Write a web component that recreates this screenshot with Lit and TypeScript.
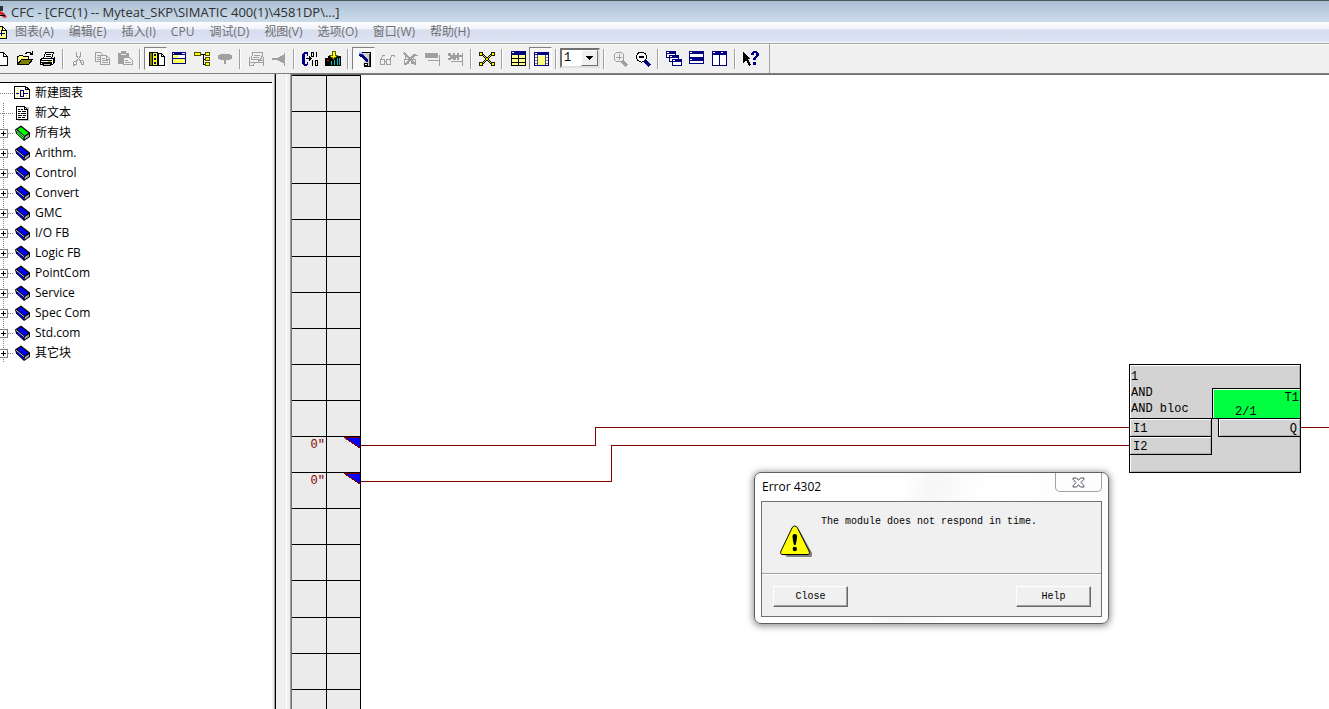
import { LitElement, html, svg, css, nothing } from "lit";
import { customElement, property, state } from "lit/decorators.js";
import { classMap } from "lit/directives/class-map.js";

const GRAY = "#a0a0a0";
const NAVY = "#000080";

/* Toolbar glyphs, drawn on an 18 x 16 pixel grid. */
const glyphs: Record<string, unknown> = {
  fresh: svg`<path d="M2.5 1.5h8l4 4v9h-12z" fill="#fff" stroke="#000"/><path d="M10.5 1.5v4h4" fill="none" stroke="#000"/>`,
  open: svg`<path d="M1.5 13.5v-8h1l1-1h3l1 1h5v3" fill="#ffff80" stroke="#000"/><path d="M1.5 13.5l4-5h11l-4 5z" fill="#808000" stroke="#000"/><path d="M9 2.5h1v-1h4v1h1v1h1M16.5 0v4M14 3.5h3" fill="none" stroke="#000"/>`,
  print: svg`<path d="M4.5 7.5l2-6h8l-2 6" fill="#fff" stroke="#000"/><path d="M7 3.500h5M6.500 5.500h5" stroke="#000"/><path d="M1.500 8.500l2-1h11l1-1v5l-2 2h-12z" fill="#fff" stroke="#000"/><path d="M1 9.500h12M14.500 7v5M2 11.500h11" stroke="#000"/><path d="M3.500 12.500h9l-1 2h-7z" fill="#c0c0c0" stroke="#000"/><path d="M9 10h3v1H9z" fill="#c0c000"/>`,
  cut: svg`<path d="M6.500 1v4l4 5M10.500 1v4l-4 5" fill="none" stroke="${GRAY}"/><path d="M4.500 10.500h2v3h-2v1h-1v-3zM10.500 9.500h2l1 1v3h-2z" fill="none" stroke="${GRAY}"/>`,
  copy: svg`<path d="M2.500 1.500h5l2 2v7h-7z" fill="#f0f0f0" stroke="${GRAY}"/><path d="M4 4.500h4M4 6.500h4M4 8.500h3" stroke="${GRAY}"/><path d="M7.500 4.500h6l3 3v6h-9z" fill="#f0f0f0" stroke="${GRAY}"/><path d="M9 7.500h3M9 9.500h6M9 11.500h6M13.500 5v3h3" fill="none" stroke="${GRAY}"/>`,
  paste: svg`<path d="M2 2h3V0h5v2h3v4h-5v7H2z" fill="${GRAY}"/><path d="M5 3.500h5" stroke="#f0f0f0"/><path d="M7.500 6.500h6l3 3v4h-9z" fill="#f0f0f0" stroke="${GRAY}"/><path d="M9 9.500h3M9 11.500h6" stroke="${GRAY}"/>`,
  catalog: svg`<path d="M2.500 1.500h4v13h-4z" fill="#808000" stroke="#000"/><path d="M5.500 1.500h5v13h-5z" fill="#ffff00" stroke="#000"/><path d="M7 3h2v2H7zM7 7h2v2H7zM7 11h2v2H7z" fill="${NAVY}"/><path d="M11.500 2.500h3l3 3v9h-6z" fill="#fff" stroke="#000"/><path d="M14.500 2.500v3h3" fill="none" stroke="#000"/>`,
  windowPane: svg`<path d="M2.500 1.500h13v11h-13z" fill="#fff" stroke="${NAVY}"/><path d="M2 1h14v3H2z" fill="${NAVY}"/><path d="M3 2h1v1H3zM12 2h3v1h-3z" fill="#fff"/><path d="M3 4h5v3H3zM3 8h12v4H3z" fill="#ffff60"/><path d="M3 7.500h12" stroke="${NAVY}"/>`,
  tree: svg`<path d="M5 3.500h5v10h2M10 8.500h2M9 3.500h3" fill="none" stroke="#000"/><path d="M1.500 1.500h6v3h-6zM12.500 1.500h4v3h-4zM12.500 6.500h4v3h-4zM12.500 11.500h4v3h-4z" fill="#ffff00" stroke="#505000"/>`,
  balloon: svg`<path d="M4 3h10v1h2v4h-2v1h-4v4H8V9H4V8H2V4h2z" fill="${GRAY}"/>`,
  sheet: svg`<path d="M5.500 1.500h10v3l-2 4h-9z" fill="none" stroke="${GRAY}"/><path d="M7 4.500h6M6 6.500h6M2.500 6v5h10M2.500 11v3h4l2-3M16.500 6v9M11 9h5v2h-5z" fill="none" stroke="${GRAY}"/>`,
  pinLeft: svg`<path d="M2 7h6v2H2zM8 6h2V5h2V4h2v8h-2v-1h-2v-1H8z" fill="${GRAY}"/><path d="M14 2h1v13h-1z" fill="${GRAY}"/>`,
  compile: svg`<path d="M7 1v4H6V3H4v10h2v-2h1v3h-1v1H3v-1H2v-1H1V3h1V2h1V1z" fill="${NAVY}"/><path d="M5 7h3V5h1v1h1v1h1v1h-1v1H9v1H8V8H5z" fill="#000"/><path d="M10.500 1.500h2v4h-2zM15.500 1v5M11.500 9v6M14.500 9.500h2v5h-2z" fill="none" stroke="#000"/>`,
  download: svg`<path d="M1 7h3V5h13v10H1z" fill="#000"/><path d="M8 0h3v4h3L9.500 8 5 4h3z" fill="#ffff00" stroke="#606000"/><path d="M3 9h2v1H3z" fill="#f00"/><path d="M7.500 10v4M10.500 9v5M13.500 7v7M15.500 7v7" stroke="#00c0c0"/>`,
  testMode: svg`<path d="M7 1h8v14H8v-3h1V8z" fill="#d0d0d0"/><path d="M6 1.500h9.500v14H9v-3" fill="none" stroke="#000"/><path d="M14 3v12" stroke="#404040"/><path d="M9.500 12.500h3v2h-3z" fill="#fff" stroke="#000"/><path d="M4 3h4v1h1v1h1v1h1v1h1v1h1v3h-2v-1h-1V9H9V8H8V7H7V6H5V5H4z" fill="${NAVY}"/><path d="M4 1h3v2H4z" fill="#b0b8ff"/>`,
  glasses: svg`<path d="M2.500 8.500h4v5h-4zM8.500 8.500h4v5h-4zM3 8l2-4h2M12 8l2-4h2v2M6 10.500h3" fill="none" stroke="${GRAY}"/>`,
  glassesOff: svg`<path d="M3.500 8.500h4v4h-4zM10.500 8.500h4v4h-4zM4 8l2-5M12 8l2-4h3" fill="none" stroke="${GRAY}"/><path d="M3 2l12 12M14 3L4 14" stroke="${GRAY}" stroke-width="2"/>`,
  rowOut: svg`<path d="M1 2h13v5H1zM4 9h12v1H4zM15 4h1v11h-1z" fill="${GRAY}"/>`,
  rowOff: svg`<path d="M1 2h3v2h2V2h2v2h2V2h2v7h-2V7H9v2H6V8H4v1H1V7h2V5H1zM4 10h12v1H4zM15 2h1v13h-1zM12 4h3v2h-3z" fill="${GRAY}"/>`,
  expand: svg`<path d="M3 2l12 12M15 2L3 14" stroke="#000" stroke-width="2.500"/><path d="M3 2l12 12M15 2L3 14" stroke="#e0e000"/><path d="M1.500 1.500h3v3h-3zM13.500 1.500h3v3h-3zM1.500 11.500h3v3h-3zM13.500 11.500h3v3h-3z" fill="#ffff00" stroke="#202000"/>`,
  table: svg`<path d="M2.500 1.500h14v13h-14z" fill="#ffff90" stroke="#000"/><path d="M2 0h15v4H2z" fill="${NAVY}"/><path d="M3 1h2v1H3z" fill="#fff"/><path d="M3 7.500h13M3 11.500h13M9.500 4v10" stroke="#000"/>`,
  columns: svg`<path d="M2.500 1.500h14v13h-14z" fill="#fff" stroke="${NAVY}"/><path d="M2 1h15v3H2z" fill="${NAVY}"/><path d="M3 2h2v1H3z" fill="#fff"/><path d="M6 5h7v9H6z" fill="#ffff80"/><path d="M5.500 4v10M13.500 4v10" stroke="#404080"/><path d="M3 6.500h2M3 9.500h2M3 12.500h2M14 6.500h2M14 9.500h2M14 12.500h2" stroke="#808080"/>`,
  zoomIn: svg`<circle cx="8" cy="6" r="5" fill="none" stroke="${GRAY}"/><path d="M5 6.500h6M8.500 3v6" stroke="${GRAY}"/><path d="M11 10l5 5" stroke="${GRAY}" stroke-width="3"/>`,
  zoomOut: svg`<circle cx="7.500" cy="6" r="5" fill="#f8f8f8" stroke="#000"/><path d="M5 6h5" stroke="#000" stroke-width="2"/><path d="M11 10l5 5" stroke="${NAVY}" stroke-width="3"/>`,
  cascade: svg`<path d="M1.500 .500h9v6h-9z" fill="#fff" stroke="${NAVY}"/><path d="M1 0h10v3H1z" fill="${NAVY}"/><path d="M4.500 4.500h9v6h-9z" fill="#fff" stroke="${NAVY}"/><path d="M4 4h10v3H4z" fill="${NAVY}"/><path d="M7.500 8.500h9v6h-9z" fill="#fff" stroke="${NAVY}"/><path d="M7 8h10v3H7z" fill="${NAVY}"/><path d="M2 1h2v1H2zM5 5h2v1H5zM8 9h2v1H8z" fill="#fff"/>`,
  tileRows: svg`<path d="M1.500 .500h14v12h-14z" fill="#fff" stroke="${NAVY}"/><path d="M1 0h15v3H1zM1 6h15v4H1z" fill="${NAVY}"/><path d="M2 1h2v1H2zM2 8h2v1H2z" fill="#fff"/>`,
  tileCols: svg`<path d="M1.500 .500h14v14h-14z" fill="#fff" stroke="${NAVY}"/><path d="M1 0h15v4H1zM8 0h1v15H8z" fill="${NAVY}"/><path d="M2 1h2v1H2zM10 1h2v1h-2z" fill="#fff"/>`,
  help: svg`<path d="M1 1l8 7H6l3 6-2 1-3-6-3 3z" fill="#000"/><path d="M9 4V2h1V1h1V0h4v1h1v1h1v3h-1v1h-1v1h-1v2h-3V7h1V6h1V5h1V2h-2v2zM11 11h3v3h-3z" fill="${NAVY}"/>`,
};

type Tool = { icon: string; label: string; pressed?: boolean; disabled?: boolean };

const toolGroups: Tool[][] = [
  [
    { icon: "fresh", label: "新建" },
    { icon: "open", label: "打开" },
    { icon: "print", label: "打印" },
  ],
  [
    { icon: "cut", label: "剪切", disabled: true },
    { icon: "copy", label: "复制", disabled: true },
    { icon: "paste", label: "粘贴", disabled: true },
  ],
  [
    { icon: "catalog", label: "目录", pressed: true },
    { icon: "windowPane", label: "图表" },
    { icon: "tree", label: "运行顺序" },
    { icon: "balloon", label: "注释", disabled: true },
  ],
  [
    { icon: "sheet", label: "跳转", disabled: true },
    { icon: "pinLeft", label: "连接", disabled: true },
  ],
  [
    { icon: "compile", label: "编译" },
    { icon: "download", label: "下载" },
  ],
  [
    { icon: "testMode", label: "测试模式", pressed: true },
    { icon: "glasses", label: "监视", disabled: true },
    { icon: "glassesOff", label: "停止监视", disabled: true },
    { icon: "rowOut", label: "插入行", disabled: true },
    { icon: "rowOff", label: "删除行", disabled: true },
  ],
  [{ icon: "expand", label: "全部显示" }],
  [
    { icon: "table", label: "总览" },
    { icon: "columns", label: "页视图", pressed: true },
  ],
];

const zoomTools: Tool[] = [
  { icon: "zoomIn", label: "放大", disabled: true },
  { icon: "zoomOut", label: "缩小" },
];

const windowTools: Tool[] = [
  { icon: "cascade", label: "层叠" },
  { icon: "tileRows", label: "水平平铺" },
  { icon: "tileCols", label: "垂直平铺" },
];

const menus = ["图表(A)", "编辑(E)", "插入(I)", "CPU", "调试(D)", "视图(V)", "选项(O)", "窗口(W)", "帮助(H)"];

const uiFont = css`"Open Sans", "Noto Sans CJK SC", sans-serif`;
const fixedFont = css`"Liberation Mono", "Noto Sans CJK SC", monospace`;

@customElement("cfc-toolbar")
export class CfcToolbar extends LitElement {
  static styles = css`
    :host {
      display: flex;
      align-items: center;
      height: 29px;
      overflow: hidden;
      background: #f0f0f0;
      border-top: 1px solid #a0a0a0;
      border-bottom: 1px solid #808080;
      box-shadow: inset 0 1px #fff;
    }
    .strip {
      display: flex;
      align-items: center;
      align-self: stretch;
      margin-left: -10px;
      padding-right: 7px;
      border-right: 1px solid #a0a0a0;
    }
    .tool {
      box-sizing: border-box;
      width: 23px;
      height: 23px;
      margin: 0;
      padding: 0;
      border: 1px solid transparent;
      background: none;
      display: flex;
      align-items: center;
      justify-content: center;
    }
    .tool.pressed {
      padding-left: 1px;
      border-color: #808080 #fff #fff #808080;
      background: #f8f8f8;
    }
    .glyph {
      display: block;
      flex: none;
      width: 18px;
      height: 16px;
      shape-rendering: crispEdges;
    }
    .sep {
      width: 8px;
      height: 20px;
      background: linear-gradient(#a0a0a0, #a0a0a0) 3px 0 / 1px 100% no-repeat,
        linear-gradient(#fff, #fff) 4px 0 / 1px 100% no-repeat;
    }
    .picker {
      box-sizing: border-box;
      display: flex;
      width: 40px;
      height: 20px;
      margin-bottom: 2px;
      position: relative;
      border: 2px solid;
      border-color: #707070 #e0e0e0 #e0e0e0 #707070;
      background: #fff;
    }
    .picker select {
      appearance: none;
      width: 100%;
      border: 0;
      margin: 0;
      padding: 0 0 0 2px;
      background: none;
      border-radius: 0;
      color: #000;
      font: 12px/16px ${fixedFont};
    }
    .drop {
      box-sizing: border-box;
      position: absolute;
      top: 0;
      right: 0;
      width: 17px;
      height: 16px;
      pointer-events: none;
      background: #f0f0f0;
      border: 1px solid;
      border-color: #fff #707070 #707070 #fff;
      shape-rendering: crispEdges;
    }
  `;

  @state() private page = "1";

  private tool(t: Tool) {
    return html`<button
      class=${classMap({ tool: true, pressed: !!t.pressed })}
      type="button"
      aria-label=${t.label}
      ?disabled=${t.disabled}
    >
      <svg class="glyph" viewBox="0 0 18 16" aria-hidden="true">${glyphs[t.icon]}</svg>
    </button>`;
  }

  render() {
    return html`<div class="strip" role="toolbar">
      ${toolGroups.map((g) => html`${g.map((t) => this.tool(t))}<span class="sep"></span>`)}
      <label class="picker">
        <select aria-label="页" .value=${this.page} @change=${(e: Event) => (this.page = (e.target as HTMLSelectElement).value)}>
          <option>1</option>
        </select>
        <svg class="drop" viewBox="0 0 15 14" aria-hidden="true"><path d="M4 5h7v1h-1v1H9v1H8v1H7V8H6V7H5V6H4z" /></svg>
      </label>
      <span class="sep"></span>
      ${zoomTools.map((t) => this.tool(t))}<span class="sep"></span>
      ${windowTools.map((t) => this.tool(t))}<span class="sep"></span>
      ${this.tool({ icon: "help", label: "帮助" })}
    </div>`;
  }
}

type Node = { name: string; kind: "chart" | "text" | "green" | "blue" };

const nodes: Node[] = [
  { name: "新建图表", kind: "chart" },
  { name: "新文本", kind: "text" },
  { name: "所有块", kind: "green" },
  ...["Arithm.", "Control", "Convert", "GMC", "I/O FB", "Logic FB", "PointCom", "Service", "Spec Com", "Std.com", "其它块"].map(
    (name): Node => ({ name, kind: "blue" })
  ),
];

function nodeIcon(kind: Node["kind"]) {
  if (kind === "chart")
    return svg`<path d="M.500 1.500h11l4 3v9h-15z" fill="#fff" stroke="#000"/><path d="M11.500 1.500v3h4" fill="none" stroke="#000"/><path d="M3.500 3v10M12.500 6v7" stroke="#e0e000" stroke-dasharray="1 1"/><path d="M2 8.500h3M10 8.500h4" stroke="#000080"/><path d="M6.500 5.500h3v6h-3z" fill="#ffff90" stroke="#000080"/>`;
  if (kind === "text")
    return svg`<path d="M4 2h11v14H4z" fill="#c0c0c0"/><path d="M2.500 1.500h8l3 3v10h-11z" fill="#fff" stroke="#000"/><path d="M10.500 1.500v3h3" fill="none" stroke="#000"/><path d="M4 4.500h2M7 4.500h2M4 6.500h3M8 6.500h4M4 8.500h2M7 8.500h5M4 10.500h4M9 10.500h3M4 12.500h3M8 12.500h3" stroke="#000"/>`;
  const fill = kind === "green" ? "#00ff00" : "#0000ff";
  return svg`<path d="M1 4.500L7 .500l9 7v4.500l-6 4L2 8.500z" fill="#000"/><path d="M3.500 4.500L7 2l7.500 6-4 2.700z" fill="${fill}"/><path d="M2.500 6.500l7 6v2l-6.500-6z" fill="${fill}"/><path d="M2 5.200l8 6.500" stroke="#e0e0e0" stroke-width=".9"/><path d="M10.700 12L15 9.200v2.300l-4.300 3z" fill="#a8a8a8"/>`;
}

@customElement("block-catalog")
export class BlockCatalog extends LitElement {
  static styles = css`
    :host {
      display: block;
      background: #fff;
      border-top: 1px solid #000;
      box-sizing: border-box;
      overflow: hidden;
      font: 12px/20px ${uiFont};
      color: #000;
    }
    .nodes {
      list-style: none;
      margin: 0;
      padding: 0;
    }
    .node {
      display: flex;
      align-items: center;
      height: 20px;
      background: linear-gradient(90deg, #808080 50%, transparent 50%) 4px 10px / 2px 1px repeat-x,
        linear-gradient(#808080 50%, transparent 50%) 3px 0 / 1px 2px repeat-y;
    }
    .node:first-child {
      background-image: linear-gradient(90deg, #808080 50%, transparent 50%);
      background-size: 2px 1px;
    }
    .knob {
      box-sizing: border-box;
      flex: none;
      width: 9px;
      height: 9px;
      margin: 0 6px 0 -1px;
      padding: 0;
      border: 1px solid #808080;
      background: linear-gradient(#000, #000) center / 5px 1px no-repeat, linear-gradient(#000, #000) center / 1px 5px no-repeat,
        #fff;
    }
    .gap {
      flex: none;
      width: 14px;
    }
    .body {
      flex: 1;
      display: flex;
      align-items: center;
      gap: 5px;
      background: #fff;
      white-space: nowrap;
    }
    .pic {
      flex: none;
      width: 16px;
      height: 16px;
    }
    .pic.crisp {
      shape-rendering: crispEdges;
    }
  `;

  render() {
    return html`<ul class="nodes">
      ${nodes.map((n) => {
        const book = n.kind === "green" || n.kind === "blue";
        return html`<li class="node">
          ${book ? html`<button class="knob" type="button" aria-label="展开 ${n.name}"></button>` : html`<span class="gap"></span>`}
          <span class="body">
            <svg class=${classMap({ pic: true, crisp: !book })} viewBox="0 0 16 16" aria-hidden="true">${nodeIcon(n.kind)}</svg>
            <span>${n.name}</span>
          </span>
        </li>`;
      })}
    </ul>`;
  }
}

@customElement("function-block")
export class FunctionBlock extends LitElement {
  static styles = css`
    :host {
      display: block;
      box-sizing: border-box;
      width: 172px;
      padding-bottom: 17px;
      border: 1px solid #000;
      background: #d3d3d3;
      box-shadow: inset 1px 1px #fff, inset -1px -1px #b0b0b0;
      font: 12px/16px ${fixedFont};
      color: #000;
    }
    .head {
      display: flex;
      align-items: flex-end;
      justify-content: space-between;
      border-bottom: 1px solid #000;
    }
    .names {
      padding: 4px 0 1px 1px;
      white-space: nowrap;
    }
    .task {
      box-sizing: border-box;
      width: 88px;
      height: 30px;
      padding: 2px 1px 0 22px;
      border: 1px solid #000;
      border-right: 0;
      border-bottom: 0;
      background: #00ff40;
      box-shadow: inset 1px 1px #e8ffe8;
      line-height: 14px;
    }
    .order {
      text-align: right;
    }
    .pins {
      display: flex;
      justify-content: space-between;
      align-items: flex-start;
    }
    .pin {
      box-sizing: border-box;
      width: 82px;
      height: 18px;
      padding: 1px 3px 0;
      line-height: 18px;
      border: solid #000;
      border-width: 0 1px 1px 0;
      box-shadow: inset 1px 1px #fff, inset -1px -1px #b0b0b0;
    }
    .pin.out {
      border-width: 0 0 1px 1px;
      text-align: right;
    }
  `;

  render() {
    return html`
      <div class="head">
        <div class="names">
          <div>1</div>
          <div>AND</div>
          <div>AND bloc</div>
        </div>
        <div class="task">
          <div class="order">T1</div>
          <div>2/1</div>
        </div>
      </div>
      <div class="pins">
        <div>
          <div class="pin">I1</div>
          <div class="pin">I2</div>
        </div>
        <div class="pin out">Q</div>
      </div>
    `;
  }
}

@customElement("error-dialog")
export class ErrorDialog extends LitElement {
  static styles = css`
    :host {
      display: block;
      box-sizing: border-box;
      width: 355px;
      padding: 0 6px 6px;
      border: 1px solid #606060;
      border-radius: 7px;
      background: linear-gradient(105deg, #fff 38%, #f6f6f6 46%, #fff 60%, #fcfcfc);
      box-shadow: 0 1px 7px 1px rgba(0, 0, 0, 0.45);
      color: #000;
    }
    .title {
      display: flex;
      justify-content: space-between;
      align-items: flex-start;
      height: 28px;
    }
    .caption {
      margin: 0;
      padding-left: 1px;
      font: 12px/27px ${uiFont};
    }
    .dismiss {
      box-sizing: border-box;
      width: 47px;
      height: 19px;
      padding: 0;
      display: flex;
      align-items: center;
      justify-content: center;
      border: 1px solid #a0a0a0;
      border-top: 0;
      border-radius: 0 0 5px 5px;
      background: #fdfdfd;
    }
    .panel {
      border: 1px solid #707070;
      background: #f0f0f0;
      font: 10px/14px ${fixedFont};
    }
    .message {
      display: flex;
      gap: 9px;
      min-height: 72px;
      box-sizing: border-box;
      padding: 13px 18px 0;
      border-bottom: 1px solid #a0a0a0;
      box-shadow: 0 1px #fff;
    }
    .sign {
      flex: none;
      width: 32px;
      height: 32px;
      margin-top: 10px;
    }
    .message p {
      margin: 0;
    }
    .actions {
      display: flex;
      justify-content: space-between;
      padding: 12px 10px 9px 11px;
    }
    .action {
      box-sizing: border-box;
      width: 75px;
      height: 21px;
      padding: 0;
      border: 1px solid;
      border-color: #fff #696969 #696969 #fff;
      box-shadow: inset -1px -1px #a0a0a0;
      background: #f0f0f0;
      color: #000;
      font: inherit;
    }
  `;

  render() {
    return html`
      <div class="title">
        <h2 class="caption">Error 4302</h2>
        <button class="dismiss" type="button" aria-label="关闭">
          <svg width="13" height="11" viewBox="0 0 13 11" aria-hidden="true">
            <path
              d="M1 1h3.500l2 2.300 2-2.300H12v1.200L9 5.500l3 3.300V10H8.500l-2-2.300-2 2.300H1V8.800l3-3.300-3-3.300z"
              fill="#fff"
              stroke="#50505c"
            />
          </svg>
        </button>
      </div>
      <div class="panel">
        <div class="message">
          <svg class="sign" viewBox="0 0 32 32" aria-hidden="true">
            <path d="M16 3q2 0 3 2l12 22q2 4-2 4H7q-4 0-2-4L14 5z" fill="#808080" transform="translate(1 1)" />
            <path d="M14.500 1q2 0 3 2l11.500 23q1.500 3.500-2 3.500H3q-3.500 0-2-3.500L12 3q1-2 2.500-2z" fill="#ffff00" stroke="#000" />
            <path d="M12.500 11q0-2 2.300-2t2.300 2q0 4-1.500 9h-1.600q-1.500-5-1.500-9z" />
            <circle cx="14.800" cy="24" r="2.200" />
          </svg>
          <p>The module does not respond in time.</p>
        </div>
        <div class="actions">
          <button class="action" type="button">Close</button>
          <button class="action" type="button">Help</button>
        </div>
      </div>
    `;
  }
}

const MARGIN_ROWS = 18;
const SIGNAL_ROWS = [10, 11];

@customElement("app-root")
export class AppRoot extends LitElement {
  static styles = css`
    :host {
      display: flex;
      flex-direction: column;
      height: 100vh;
      overflow: hidden;
      background: #f0f0f0;
      font: 12px/20px ${uiFont};
      color: #000;
    }
    .titlebar {
      display: flex;
      align-items: center;
      gap: 3px;
      height: 22px;
      flex: none;
      border-top: 1px solid #505860;
      box-sizing: border-box;
      background: linear-gradient(#a9bdd0, #bccfe0 50%, #cddbe9);
      color: #303030;
    }
    .titlebar h1 {
      margin: 0;
      font: 13px/18px ${uiFont};
      white-space: nowrap;
    }
    .logo {
      flex: none;
      width: 8px;
      height: 16px;
    }
    .menubar {
      display: flex;
      align-items: center;
      gap: 15px;
      height: 21px;
      flex: none;
      background: linear-gradient(#fcfdff, #f0f3fa 35%, #d5dcee 40%, #dfe5f4);
      border-bottom: 1px solid #f8f8f8;
      box-sizing: border-box;
    }
    .chart {
      flex: none;
      width: 8px;
      height: 14px;
      margin-right: -8px;
      shape-rendering: crispEdges;
    }
    .menu {
      border: 0;
      padding: 0;
      background: none;
      color: #707070;
      font: 12px/20px ${uiFont};
      white-space: nowrap;
    }
    cfc-toolbar {
      flex: none;
    }
    .workspace {
      flex: 1;
      min-height: 0;
      display: flex;
    }
    .side {
      flex: none;
      width: 276px;
      display: flex;
      flex-direction: column;
      padding-top: 8px;
      box-sizing: border-box;
      border-right: 1px solid #000;
      box-shadow: inset -1px 0 #a0a0a0;
    }
    block-catalog {
      flex: 1;
      margin-right: 3px;
    }
    .splitter {
      flex: none;
      width: 15px;
      box-sizing: border-box;
      border-right: 1px solid #a0a0a0;
      background: linear-gradient(#fff, #fff) 10px 0 / 1px 100% no-repeat;
    }
    .view {
      flex: 1;
      min-width: 0;
      display: flex;
      border-left: 1px solid #707070;
      border-top: 1px solid #707070;
      background: #fff;
      overflow: hidden;
    }
    .margin {
      flex: none;
      width: 68px;
      border-right: 1px solid #000;
      border-top: 1px solid #000;
      background: #ebebeb;
    }
    .row {
      display: grid;
      grid-template-columns: 35px 1fr;
      height: 36px;
      box-sizing: border-box;
      border-bottom: 1px solid #000;
    }
    .row:nth-child(10n + 5) {
      height: 37px;
    }
    .cell {
      display: flex;
      justify-content: flex-end;
      color: #800000;
      font: 12px/16px ${fixedFont};
    }
    .cell:first-child {
      border-right: 1px solid #000;
      padding-right: 1px;
    }
    .flag {
      width: 16px;
      height: 12px;
      shape-rendering: crispEdges;
    }
    .sheet {
      flex: 1;
      min-width: 0;
      position: relative;
      overflow: hidden;
    }
    .wires {
      position: absolute;
      left: 0;
      top: 0;
      width: 100%;
      height: 100%;
      fill: none;
      stroke: #800000;
      shape-rendering: crispEdges;
    }
    function-block {
      position: absolute;
      left: 768px;
      top: 289px;
    }
    error-dialog {
      position: absolute;
      left: 393px;
      top: 397px;
    }
  `;

  @property() heading = "CFC - [CFC(1) -- Myteat_SKP\\SIMATIC 400(1)\\4581DP\\...]";

  private marginRow(i: number) {
    const signal = SIGNAL_ROWS.includes(i);
    return html`<div class="row">
      <div class="cell">${signal ? html`<span>0″</span>` : nothing}</div>
      <div class="cell">
        ${signal
          ? html`<svg class="flag" viewBox="0 0 16 12" aria-hidden="true">
              <path d="M1 0h15v11z" fill="#0000ff" />
              <path d="M0 .500h16M1 1l15 10" stroke="#800000" fill="none" />
            </svg>`
          : nothing}
      </div>
    </div>`;
  }

  render() {
    return html`
      <header class="titlebar">
        <svg class="logo" viewBox="0 0 8 16" aria-hidden="true">
          <path d="M0 2h3v5H0z" fill="#303030" />
          <path d="M0 7l4 2 3 4-3 1-4-4z" fill="#d02020" />
          <path d="M0 11h5v1H0z" fill="#000" />
        </svg>
        <h1>${this.heading}</h1>
      </header>
      <nav class="menubar">
        <svg class="chart" viewBox="0 0 8 14" aria-hidden="true">
          <path d="M-4.500 1.500h7l4 4v8h-11z" fill="#ffff80" stroke="#000" />
          <path d="M2.500 1.500v4h4" fill="none" stroke="#000" />
          <path d="M0 8.500h5M1.500 5v6" stroke="#0000a0" />
        </svg>
        ${menus.map((m) => html`<button class="menu" type="button">${m}</button>`)}
      </nav>
      <cfc-toolbar></cfc-toolbar>
      <main class="workspace">
        <div class="side"><block-catalog></block-catalog></div>
        <div class="splitter"></div>
        <div class="view">
          <div class="margin">${Array.from({ length: MARGIN_ROWS }, (_, i) => this.marginRow(i))}</div>
          <div class="sheet">
            <svg class="wires" aria-hidden="true">
              <path d="M0 370.500h234.500v-18H768M0 406.500h250.500v-36H768M940 352.500h4000" />
            </svg>
            <function-block></function-block>
            <error-dialog role="alertdialog" aria-label="Error 4302"></error-dialog>
          </div>
        </div>
      </main>
    `;
  }
}
